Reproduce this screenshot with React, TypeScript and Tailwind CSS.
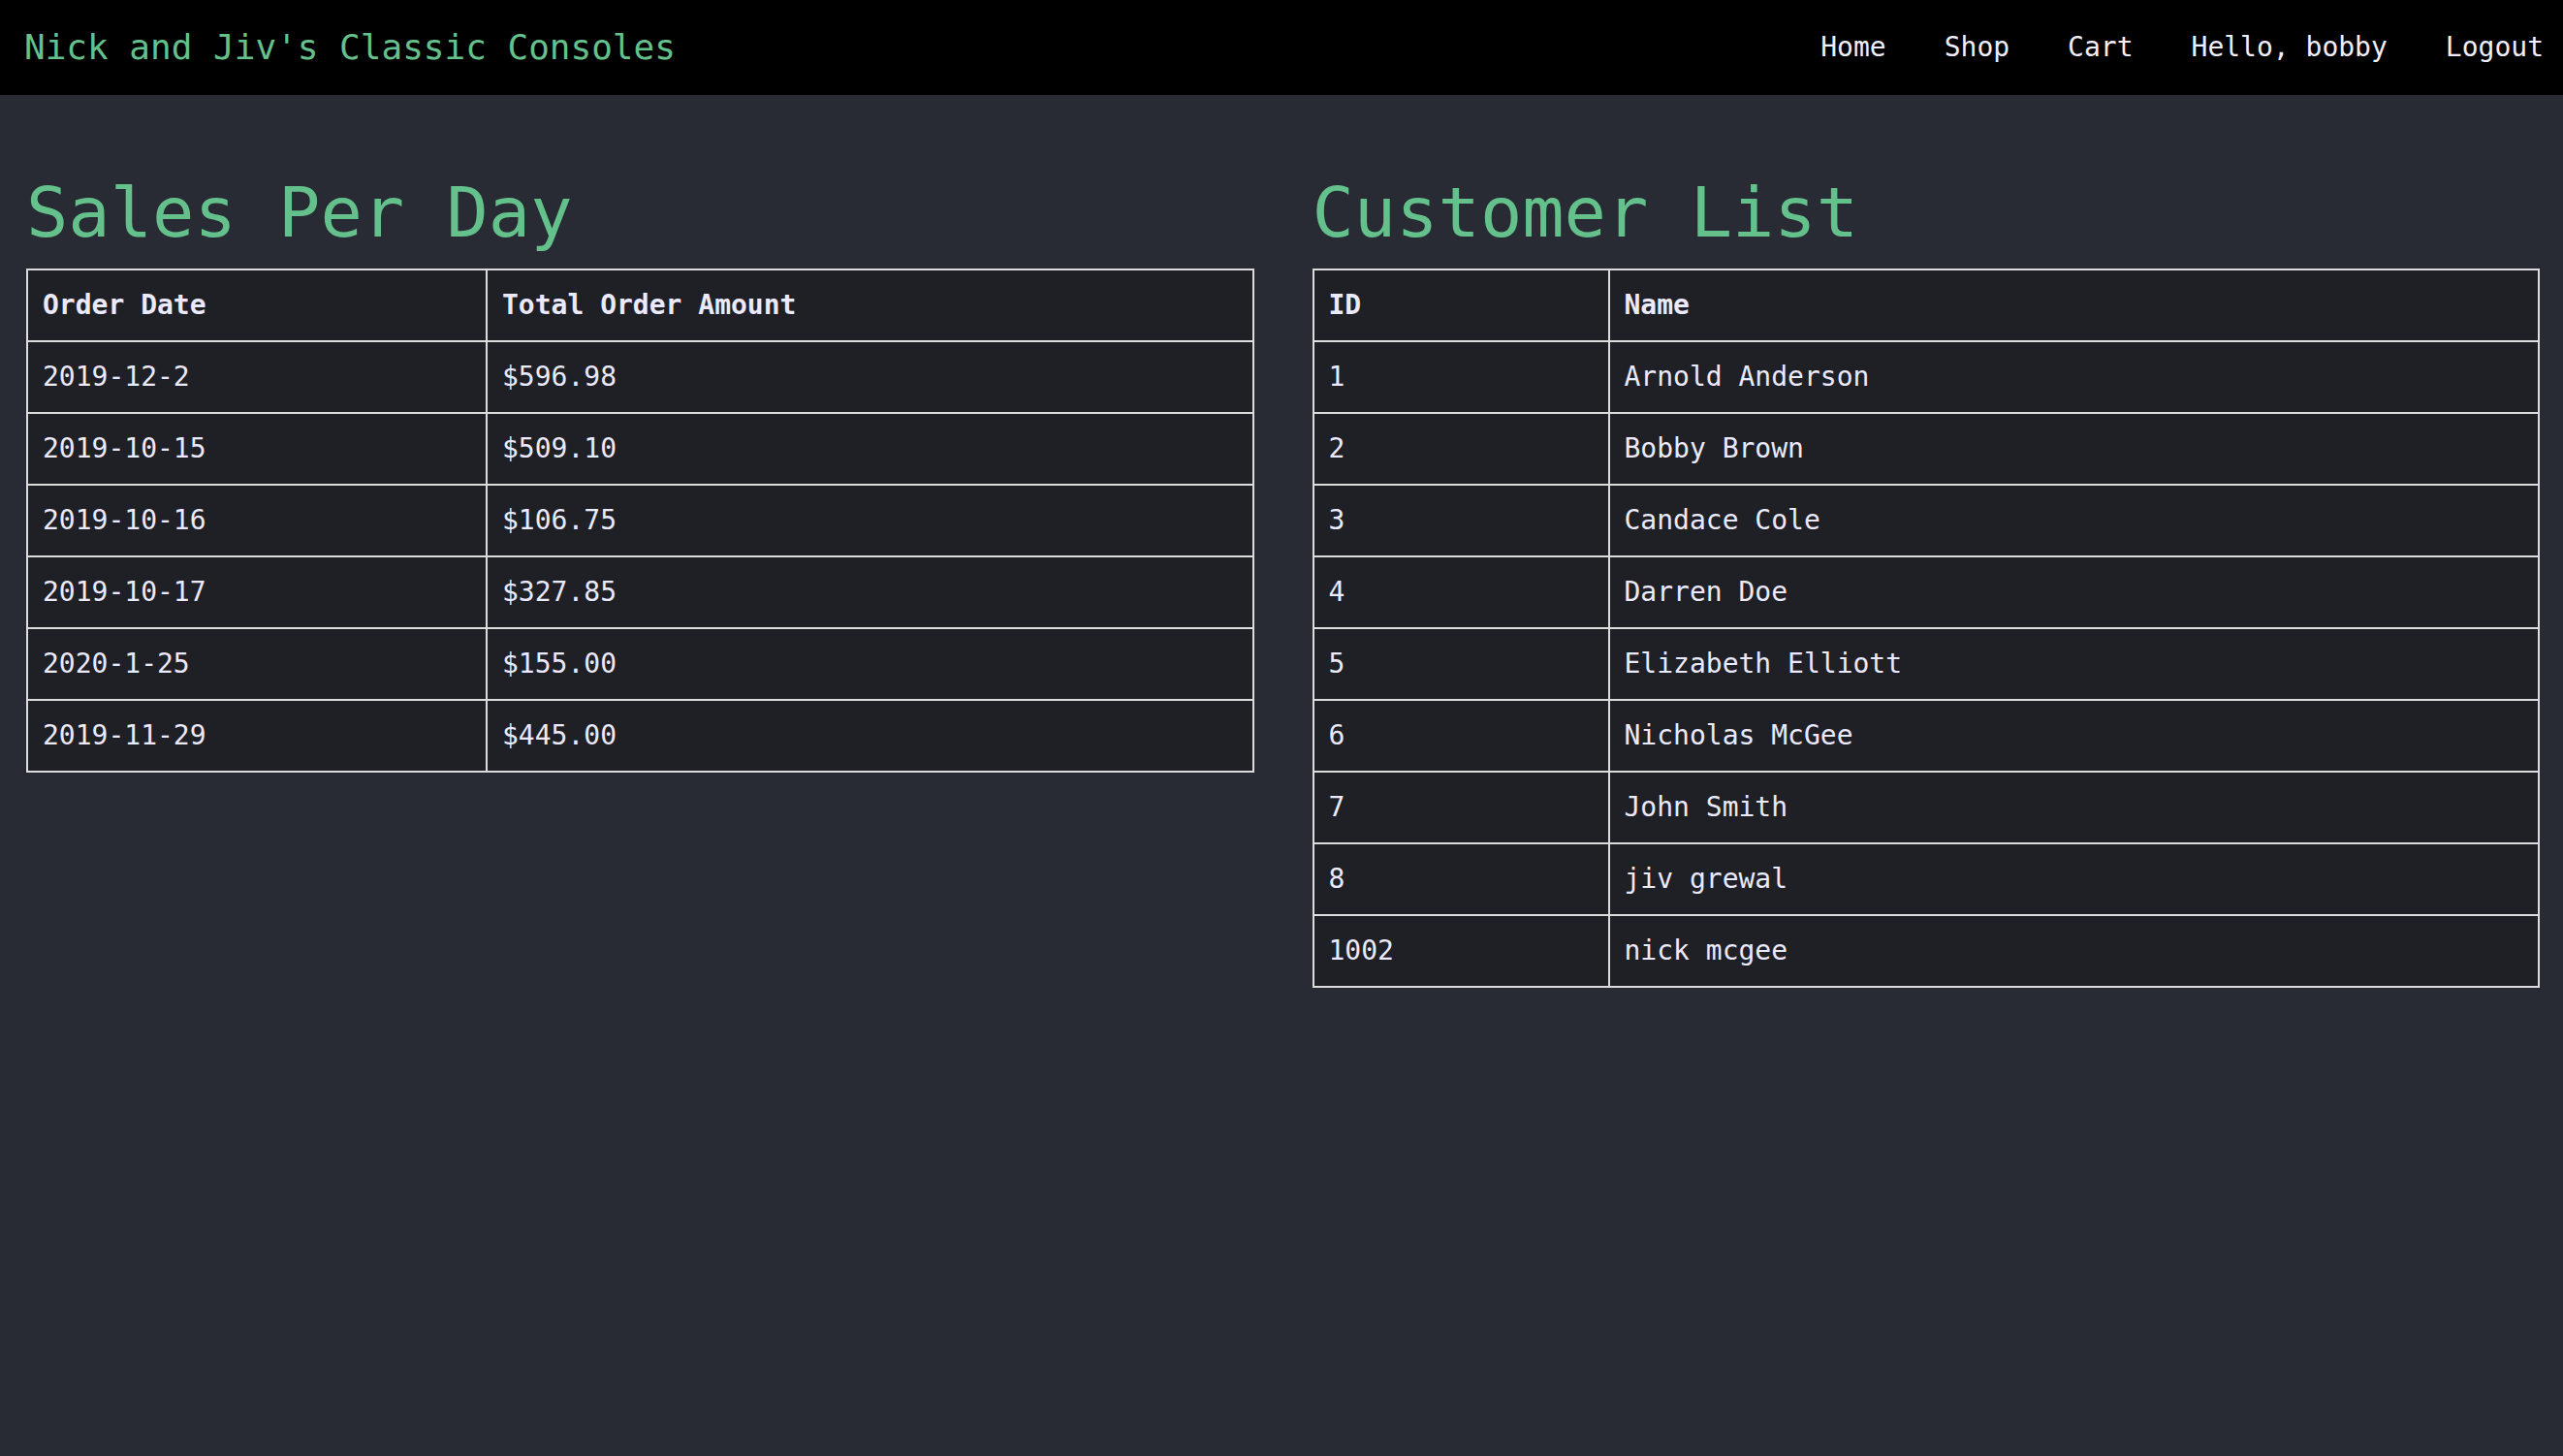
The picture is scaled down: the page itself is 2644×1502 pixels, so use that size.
import React from "react";

const sales: [string, string][] = [
  ["2019-12-2", "$596.98"],
  ["2019-10-15", "$509.10"],
  ["2019-10-16", "$106.75"],
  ["2019-10-17", "$327.85"],
  ["2020-1-25", "$155.00"],
  ["2019-11-29", "$445.00"],
];

const customers: [string, string][] = [
  ["1", "Arnold Anderson"],
  ["2", "Bobby Brown"],
  ["3", "Candace Cole"],
  ["4", "Darren Doe"],
  ["5", "Elizabeth Elliott"],
  ["6", "Nicholas McGee"],
  ["7", "John Smith"],
  ["8", "jiv grewal"],
  ["1002", "nick mcgee"],
];

const cell =
  "border-2 border-[#dcdcdc] pl-[15px] pr-[16px] py-0 h-[72px] leading-[72px] text-left align-middle";

function DataTable({
  headers,
  rows,
  firstWidth,
}: {
  headers: [string, string];
  rows: [string, string][];
  firstWidth: "left" | "right";
}) {
  return (
    <table className="w-full table-fixed border-collapse bg-[#1f2025] text-[28px] text-[#ebe9fc]">
      <thead>
        <tr>
          <th
            className={`${cell} font-bold ${
              firstWidth === "left" ? "w-[474px]" : "w-[305px]"
            }`}
          >
            {headers[0]}
          </th>
          <th className={`${cell} font-bold`}>{headers[1]}</th>
        </tr>
      </thead>
      <tbody>
        {rows.map((r, i) => (
          <tr key={i}>
            <td className={cell}>{r[0]}</td>
            <td className={cell}>{r[1]}</td>
          </tr>
        ))}
      </tbody>
    </table>
  );
}

export default function App() {
  return (
    <div
      className="min-h-[1502px] w-full bg-[#282b34]"
      style={{ fontFamily: '"DejaVu Sans Mono", "Liberation Mono", monospace' }}
    >
      <nav className="flex h-[98px] items-center justify-between bg-black pl-[25px] pr-[20px]">
        <div className="text-[36px] leading-none text-[#65c18c]">
          Nick and Jiv's Classic Consoles
        </div>
        <div className="flex items-center gap-[60px] text-[28px] leading-none text-[#efeefc]">
          <span>Home</span>
          <span>Shop</span>
          <span>Cart</span>
          <span>Hello, bobby</span>
          <span>Logout</span>
        </div>
      </nav>
      <main className="grid grid-cols-2 gap-[60px] pl-[27px] pr-[24px] pt-[85px]">
        <section>
          <h1 className="mb-[22px] text-[72px] font-normal leading-none text-[#65c18c]">
            Sales Per Day
          </h1>
          <DataTable
            headers={["Order Date", "Total Order Amount"]}
            rows={sales}
            firstWidth="left"
          />
        </section>
        <section>
          <h1 className="mb-[22px] text-[72px] font-normal leading-none text-[#65c18c]">
            Customer List
          </h1>
          <DataTable headers={["ID", "Name"]} rows={customers} firstWidth="right" />
        </section>
      </main>
    </div>
  );
}
